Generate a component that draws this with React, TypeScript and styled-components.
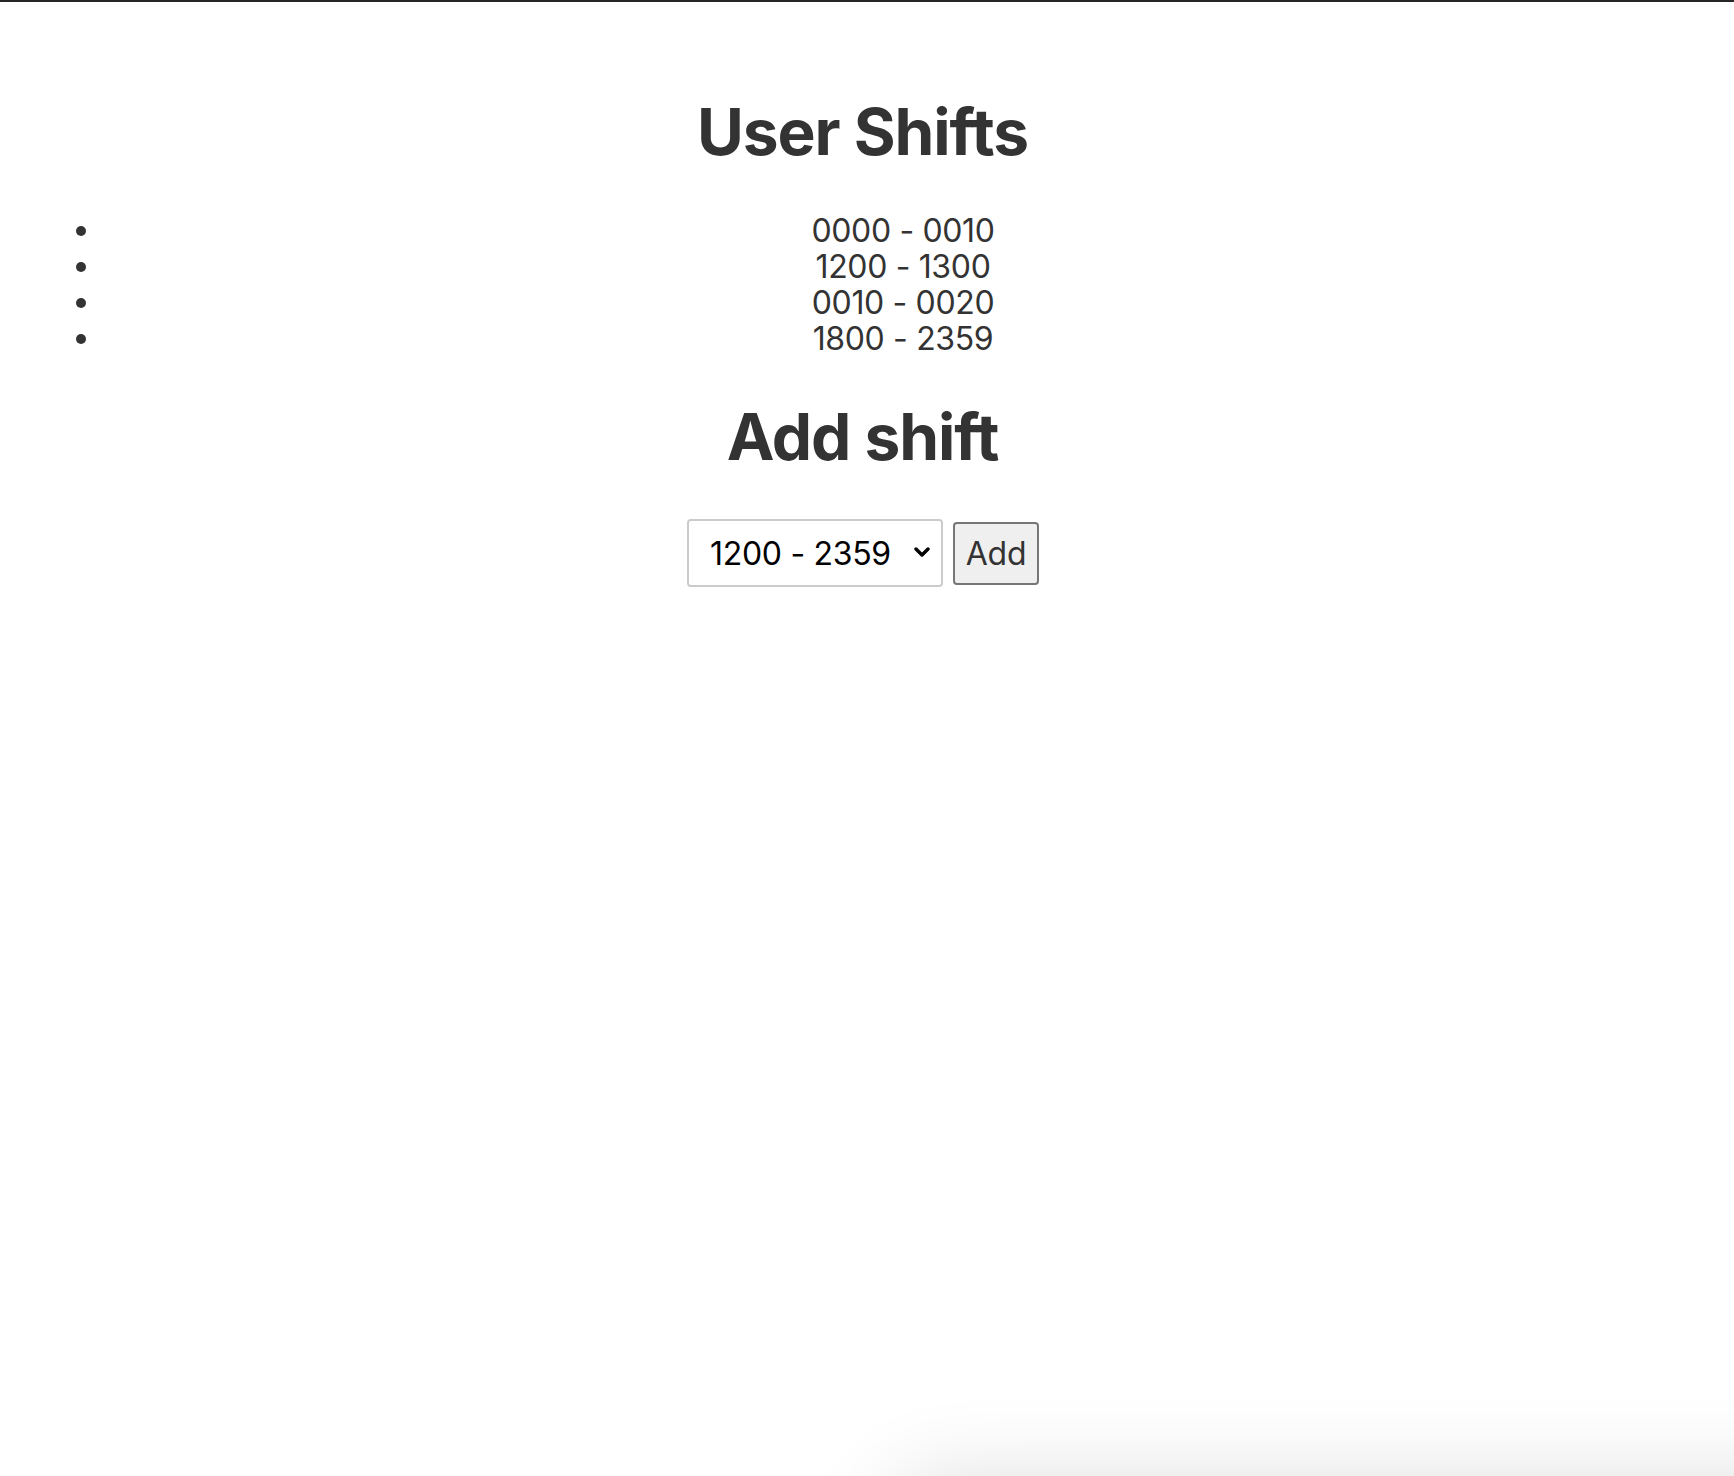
import React, { useState } from "react";
import styled, { createGlobalStyle } from "styled-components";

const GlobalStyle = createGlobalStyle`
  html, body {
    margin: 0;
    background: #ffffff;
  }
  body {
    font-family: Inter, "Noto Sans", sans-serif;
    color: #333333;
    overflow: hidden;
  }
`;

const Page = styled.div`
  border-top: 2px solid #262626;
  padding: 91px 16px 0;
  min-height: 1400px;
`;

const Heading = styled.h1<{ $top?: number }>`
  margin: ${(p) => p.$top ?? 0}px 0 0;
  padding-right: 9px;
  font-size: 64px;
  line-height: 77px;
  font-weight: 700;
  letter-spacing: -1.1px;
  text-align: center;
  color: #333333;
`;

const ShiftList = styled.ul`
  margin: 43px 0 0;
  padding: 0 16px 0 88px;
  list-style: none;
`;

const ShiftItem = styled.li`
  position: relative;
  font-size: 32px;
  line-height: 36px;
  letter-spacing: -0.35px;
  text-align: center;
  color: #333333;

  &::before {
    content: "";
    position: absolute;
    left: -28px;
    top: 13px;
    width: 10px;
    height: 10px;
    border-radius: 50%;
    background: #333333;
  }
`;

const AddRow = styled.form`
  display: flex;
  justify-content: center;
  align-items: center;
  gap: 10px;
  margin-top: 44px;
  padding-right: 8px;
`;

const SelectWrap = styled.div`
  position: relative;
  display: flex;
`;

const ShiftSelect = styled.select`
  appearance: none;
  width: 256px;
  height: 68px;
  box-sizing: border-box;
  padding: 0 40px 0 21px;
  border: 2px solid #cbcbcb;
  border-radius: 4px;
  background: #ffffff;
  font-family: Inter, "Noto Sans", sans-serif;
  font-size: 32px;
  letter-spacing: -0.3px;
  color: #000000;
  outline: none;
`;

const Chevron = styled.svg`
  position: absolute;
  right: 13px;
  top: 28px;
  pointer-events: none;
`;

const AddButton = styled.button`
  width: 86px;
  height: 63px;
  box-sizing: border-box;
  padding: 0;
  border: 2px solid #767676;
  border-radius: 4px;
  background: #efefef;
  font-family: Inter, "Noto Sans", sans-serif;
  font-size: 32px;
  letter-spacing: -0.3px;
  color: #333333;
  cursor: pointer;
`;

const EdgeShadow = styled.div`
  position: fixed;
  left: 900px;
  right: -200px;
  top: 1492px;
  height: 200px;
  border-radius: 40px;
  background: #ffffff;
  box-shadow: 0 0 90px 10px rgba(0, 0, 0, 0.14);
  pointer-events: none;
`;

const shifts = ["0000 - 0010", "1200 - 1300", "0010 - 0020", "1800 - 2359"];
const options = ["0000 - 1200", "1200 - 2359", "0600 - 1800", "1800 - 2359"];

export default function App() {
  const [selected, setSelected] = useState("1200 - 2359");

  return (
    <>
      <GlobalStyle />
      <Page>
        <Heading>User Shifts</Heading>
        <ShiftList>
          {shifts.map((s, i) => (
            <ShiftItem key={i}>{s}</ShiftItem>
          ))}
        </ShiftList>
        <Heading $top={41}>Add shift</Heading>
        <AddRow onSubmit={(e) => e.preventDefault()}>
          <SelectWrap>
            <ShiftSelect
              value={selected}
              onChange={(e) => setSelected(e.target.value)}
            >
              {options.map((o) => (
                <option key={o} value={o}>
                  {o}
                </option>
              ))}
            </ShiftSelect>
            <Chevron width="16" height="11" viewBox="0 0 16 11">
              <path
                d="M2 2 L8 8 L14 2"
                fill="none"
                stroke="#000"
                strokeWidth="3.4"
                strokeLinecap="round"
                strokeLinejoin="round"
              />
            </Chevron>
          </SelectWrap>
          <AddButton type="submit">Add</AddButton>
        </AddRow>
      </Page>
      <EdgeShadow />
    </>
  );
}
